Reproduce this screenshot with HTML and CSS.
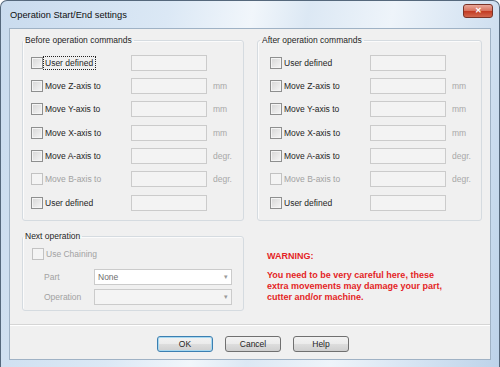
FILE: index.html
```html
<!DOCTYPE html>
<html lang="en">
<head>
    <meta charset="UTF-8">
    <title>Operation Start/End settings</title>
    <link rel="stylesheet" href="styles.css">
</head>
<body>
    <div class="window">
        <div class="titlebar">
            <span class="title">Operation Start/End settings</span>
            <span class="close-btn">&#x2715;</span>
        </div>
        <div class="client">
            <div class="groups">
                <fieldset class="group">
                    <legend>Before operation commands</legend>
                    <div class="rows">
                        <div class="row"><label class="check"><span class="box"></span><span class="focus">User defined</span></label><span class="field"></span></div>
                        <div class="row"><label class="check"><span class="box"></span>Move Z-axis to</label><span class="field"></span><span class="unit">mm</span></div>
                        <div class="row"><label class="check"><span class="box"></span>Move Y-axis to</label><span class="field"></span><span class="unit">mm</span></div>
                        <div class="row"><label class="check"><span class="box"></span>Move X-axis to</label><span class="field"></span><span class="unit">mm</span></div>
                        <div class="row"><label class="check"><span class="box"></span>Move A-axis to</label><span class="field"></span><span class="unit">degr.</span></div>
                        <div class="row"><label class="check disabled"><span class="box"></span>Move B-axis to</label><span class="field"></span><span class="unit">degr.</span></div>
                        <div class="row"><label class="check"><span class="box"></span>User defined</label><span class="field"></span></div>
                    </div>
                </fieldset>
                <fieldset class="group after">
                    <legend>After operation commands</legend>
                    <div class="rows">
                        <div class="row"><label class="check"><span class="box"></span>User defined</label><span class="field"></span></div>
                        <div class="row"><label class="check"><span class="box"></span>Move Z-axis to</label><span class="field"></span><span class="unit">mm</span></div>
                        <div class="row"><label class="check"><span class="box"></span>Move Y-axis to</label><span class="field"></span><span class="unit">mm</span></div>
                        <div class="row"><label class="check"><span class="box"></span>Move X-axis to</label><span class="field"></span><span class="unit">mm</span></div>
                        <div class="row"><label class="check"><span class="box"></span>Move A-axis to</label><span class="field"></span><span class="unit">degr.</span></div>
                        <div class="row"><label class="check disabled"><span class="box"></span>Move B-axis to</label><span class="field"></span><span class="unit">degr.</span></div>
                        <div class="row"><label class="check"><span class="box"></span>User defined</label><span class="field"></span></div>
                    </div>
                </fieldset>
            </div>

            <div class="groups lower">
                <fieldset class="group">
                    <legend>Next operation</legend>
                    <div class="next-op">
                        <label class="check disabled chaining"><span class="box"></span>Use Chaining</label>
                        <div class="combo-rows">
                            <span class="combo-label">Part</span>
                            <span class="combo white">None<span class="arrow">&#9662;</span></span>
                            <span class="combo-label">Operation</span>
                            <span class="combo"><span class="arrow">&#9662;</span></span>
                        </div>
                    </div>
                </fieldset>
                <div class="warning">
                    <p class="warning-title">WARNING:</p>
                    <p>You need to be very careful here, these extra movements may damage your part, cutter and/or machine.</p>
                </div>
            </div>

            <div class="separator"></div>

            <div class="buttons">
                <button class="btn default">OK</button>
                <button class="btn">Cancel</button>
                <button class="btn">Help</button>
            </div>
        </div>
    </div>
</body>
</html>
```

FILE: styles.css
```css
body {
    margin: 0;
    background: #ffffff;
    font-family: "Liberation Sans", Arial, sans-serif;
    font-size: 8.5px;
    color: #1e1e1e;
}
.window {
    width: 500px;
    height: 367px;
    box-sizing: border-box;
    border: 1px solid #55687c;
    border-bottom: none;
    border-radius: 7px 7px 0 0;
    padding: 0 8px;
    display: flex;
    flex-direction: column;
    background: linear-gradient(100deg, #c9dbee 0%, #dbe8f5 30%, #f1f6fb 45%, #dce8f4 55%, #eef4fa 70%, #bdd3ea 100%);
}
.titlebar {
    height: 27px;
    display: flex;
    justify-content: space-between;
    align-items: center;
}
.title {
    padding-left: 1px;
    font-size: 9.3px;
    color: #101010;
}
.close-btn {
    align-self: flex-start;
    margin-top: 3px;
    margin-right: -2px;
    width: 30px;
    height: 14px;
    box-sizing: border-box;
    border: 1px solid #7a3327;
    border-radius: 3px;
    background: linear-gradient(#e9a799 0%, #d8735f 48%, #c23a22 52%, #d2674e 100%);
    color: #ffffff;
    font-size: 8px;
    font-weight: bold;
    line-height: 12px;
    text-align: center;
}
.client {
    flex: 1;
    margin-bottom: 7px;
    border: 1px solid #9fb2c5;
    background: #f0f0f0;
    display: flex;
    flex-direction: column;
}
.groups {
    display: grid;
    grid-template-columns: 222px 225px;
    column-gap: 13px;
    padding: 5px 0 0 12px;
}
.lower {
    padding-top: 9px;
}
.group {
    margin: 0;
    padding: 0;
    border: 1px solid #d5dbe0;
    border-radius: 3px;
    box-shadow: inset 1px 1px 0 #fbfbfb;
}
.group legend {
    padding: 0 2px;
    line-height: 12px;
    color: #1e1e1e;
}
.after legend {
    margin-left: 2px;
}
.rows {
    padding: 5px 0 6px 8px;
}
.after .rows {
    padding-left: 12px;
}
.row {
    height: 23.33px;
    display: grid;
    grid-template-columns: 100px 76px auto;
    align-items: center;
}
.check {
    display: flex;
    align-items: center;
    gap: 2px;
}
.box {
    width: 12px;
    height: 12px;
    box-sizing: border-box;
    border: 1px solid #8e8f8f;
    background: linear-gradient(135deg, #d6d6d6, #f6f6f6);
    box-shadow: inset 0 0 0 1px #f4f4f4;
}
.focus {
    outline: 1px dotted #222;
    outline-offset: 1px;
    padding-right: 1px;
}
.disabled {
    color: #a2a2a2;
}
.disabled .box {
    border-color: #c2c2c2;
    background: #f4f4f4;
}
.field {
    height: 16px;
    box-sizing: border-box;
    border: 1px solid #cbcbcb;
    background: #f3f3f3;
}
.unit {
    padding-left: 6px;
    color: #a8a8a8;
}
.next-op {
    padding: 4px 0 5px 9px;
}
.chaining {
    height: 16px;
}
.combo-rows {
    display: grid;
    grid-template-columns: 50px 138px;
    row-gap: 4px;
    align-items: center;
    margin-top: 7px;
    padding-left: 12px;
    color: #a2a2a2;
}
.combo {
    height: 16px;
    box-sizing: border-box;
    border: 1px solid #cbcbcb;
    background: #f4f4f4;
    display: flex;
    align-items: center;
    padding: 0 3px;
    color: #6e6e6e;
}
.combo.white {
    background: #ffffff;
}
.arrow {
    margin-left: auto;
    color: #9a9a9a;
    font-size: 7px;
}
.warning {
    padding: 21px 0 0 10px;
    color: #e41f26;
    font-weight: bold;
    font-size: 9px;
    line-height: 11px;
}
.warning p {
    margin: 0;
    width: 180px;
}
.warning .warning-title {
    margin-bottom: 8px;
}
.separator {
    margin-top: 13px;
    height: 1px;
    background: #d5d5d5;
    border-bottom: 1px solid #ffffff;
}
.buttons {
    display: flex;
    justify-content: center;
    gap: 12px;
    padding-left: 6px;
    margin-top: 10px;
}
.btn {
    width: 56px;
    height: 16px;
    box-sizing: border-box;
    border: 1px solid #707070;
    border-radius: 3px;
    background: linear-gradient(#f2f2f2 0%, #ebebeb 48%, #dddddd 52%, #cfcfcf 100%);
    font-family: "Liberation Sans", Arial, sans-serif;
    font-size: 8.5px;
    color: #1e1e1e;
    padding: 0;
}
.btn.default {
    border-color: #3c7fb1;
    box-shadow: inset 0 0 0 1px #a7d8f0;
}
```
